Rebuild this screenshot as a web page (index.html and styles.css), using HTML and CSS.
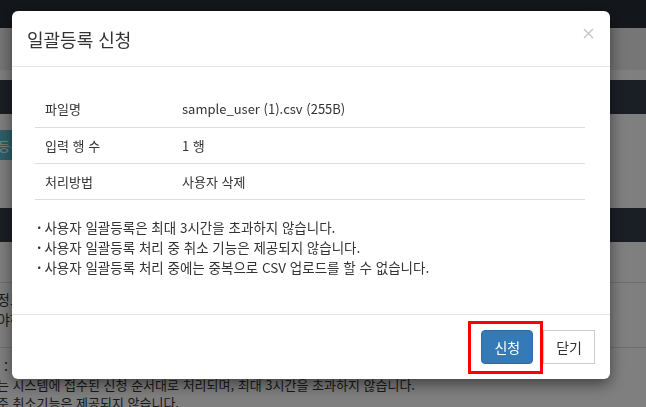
FILE: index.html
```html
<!DOCTYPE html>
<html lang="ko">
<head>
    <meta charset="UTF-8">
    <meta name="viewport" content="width=device-width, initial-scale=1.0">
    <title>일괄등록 신청</title>
    <link rel="stylesheet" href="styles.css">
</head>
<body>
    <div class="page">
        <div class="topbar"></div>
        <div class="subbar"></div>
        <div class="gap-white"></div>
        <div class="section-head"></div>
        <div class="section-body">
            <button class="btn-info">일괄등록</button>
        </div>
        <div class="section-head"></div>
        <div class="section-body info">
            <div class="info-row line">
                <div class="info-text">정보</div>
                <div class="info-text">야하</div>
            </div>
            <div class="info-row">
                <div class="info-text">:</div>
            </div>
            <p class="guide">는 시스템에 접수된 신청 순서대로 처리되며, 최대 3시간을 초과하지 않습니다.</p>
            <p class="guide">주 취소기능은 제공되지 않습니다.</p>
        </div>
    </div>

    <div class="backdrop"></div>

    <div class="modal">
        <div class="modal-header">
            <h4 class="modal-title">일괄등록 신청</h4>
            <button class="close" aria-label="닫기">
                <svg width="11" height="11" viewBox="0 0 11 11">
                    <path d="M1 1L10 10M10 1L1 10" stroke="#c4c4c4" stroke-width="1.4" fill="none"/>
                </svg>
            </button>
        </div>
        <div class="modal-body">
            <table class="summary">
                <tr>
                    <th>파일명</th>
                    <td>sample_user (1).csv (255B)</td>
                </tr>
                <tr>
                    <th>입력 행 수</th>
                    <td>1 행</td>
                </tr>
                <tr>
                    <th>처리방법</th>
                    <td>사용자 삭제</td>
                </tr>
            </table>
            <ul class="notes">
                <li>사용자 일괄등록은 최대 3시간을 초과하지 않습니다.</li>
                <li>사용자 일괄등록 처리 중 취소 기능은 제공되지 않습니다.</li>
                <li>사용자 일괄등록 처리 중에는 중복으로 CSV 업로드를 할 수 없습니다.</li>
            </ul>
        </div>
        <div class="modal-footer">
            <span class="highlight">
                <button class="btn btn-primary">신청</button>
            </span>
            <button class="btn btn-default">닫기</button>
        </div>
    </div>
</body>
</html>
```

FILE: styles.css
```css
* {
    box-sizing: border-box;
}

body {
    margin: 0;
    font-family: "Noto Sans CJK KR", "Noto Sans", sans-serif;
    font-size: 13px;
    color: #333;
    background: #fff;
    overflow: hidden;
}

/* page behind the dialog */
.page {
    height: 407px;
}

.topbar {
    height: 28px;
    background: #272d37;
}

.subbar {
    height: 42px;
    background: #ececec;
}

.gap-white {
    height: 10px;
    background: #fff;
}

.section-head {
    height: 34px;
    background: #363e4b;
}

.section-body {
    height: 94px;
    padding-top: 16px;
}

.btn-info {
    margin-left: -34px;
    width: 60px;
    height: 30px;
    border: none;
    background: #5bbfd6;
    color: #fff;
    font-family: inherit;
    font-size: 13px;
    text-align: right;
    padding: 0 4px;
}

.section-body.info {
    padding-top: 40px;
}

.info-row.line {
    border-top: 1px solid #ddd;
    border-bottom: 1px solid #ddd;
    padding: 6px 0 18px;
    height: 66px;
}

.info-text {
    font-size: 14px;
    line-height: 20px;
    margin-left: -3px;
}

.info-row:not(.line) {
    padding: 8px 0 0 4px;
    height: 28px;
}

.info-row:not(.line) .info-text {
    margin-left: 0;
}

.guide {
    margin: 0 0 0 -3px;
    font-size: 13px;
    line-height: 18px;
    white-space: nowrap;
}

/* dialog */
.backdrop {
    position: fixed;
    inset: 0;
    background: rgba(0, 0, 0, 0.5);
}

.modal {
    position: fixed;
    top: 11px;
    left: 12px;
    width: 598px;
    height: 368px;
    background: #fff;
    border-radius: 6px;
    box-shadow: 0 5px 15px rgba(0, 0, 0, 0.5);
    display: flex;
    flex-direction: column;
}

.modal-header {
    display: flex;
    align-items: center;
    justify-content: space-between;
    height: 56px;
    padding: 0 16px 0 15px;
    border-bottom: 1px solid #e5e5e5;
}

.modal-title {
    margin: 0;
    font-size: 18px;
    font-weight: normal;
    color: #333;
}

.close {
    border: none;
    background: none;
    padding: 0;
    margin-top: -10px;
    width: 11px;
    height: 11px;
    cursor: pointer;
}

.close svg {
    display: block;
}

.modal-body {
    flex: 1;
    padding: 24px 25px 0 23px;
}

.summary {
    width: 100%;
    border-collapse: collapse;
}

.summary th,
.summary td {
    height: 36px;
    padding: 0 10px;
    text-align: left;
    font-weight: normal;
    border-bottom: 1px solid #ddd;
}

.summary th {
    width: 137px;
}

.notes {
    list-style: none;
    margin: 17px 0 0;
    padding: 0 0 0 2px;
    font-size: 13.5px;
}

.notes li {
    line-height: 20px;
}

.notes li::before {
    content: "·";
    font-weight: bold;
    margin-right: 3px;
}

.modal-footer {
    display: flex;
    justify-content: flex-end;
    gap: 10px;
    padding: 15px;
    border-top: 1px solid #e5e5e5;
}

.highlight {
    position: relative;
    display: inline-flex;
}

.highlight::after {
    content: "";
    position: absolute;
    top: -9px;
    left: -13px;
    right: -10px;
    bottom: -10px;
    border: 3px solid #f00;
}

.btn {
    height: 34px;
    padding: 0 12px;
    font-family: inherit;
    font-size: 14px;
    border: 1px solid transparent;
    border-radius: 4px;
    cursor: pointer;
}

.btn-primary {
    background: #337ab7;
    border-color: #2e6da4;
    color: #fff;
}

.btn-default {
    background: #fff;
    border-color: #ccc;
    color: #333;
    border-radius: 0;
}
```
